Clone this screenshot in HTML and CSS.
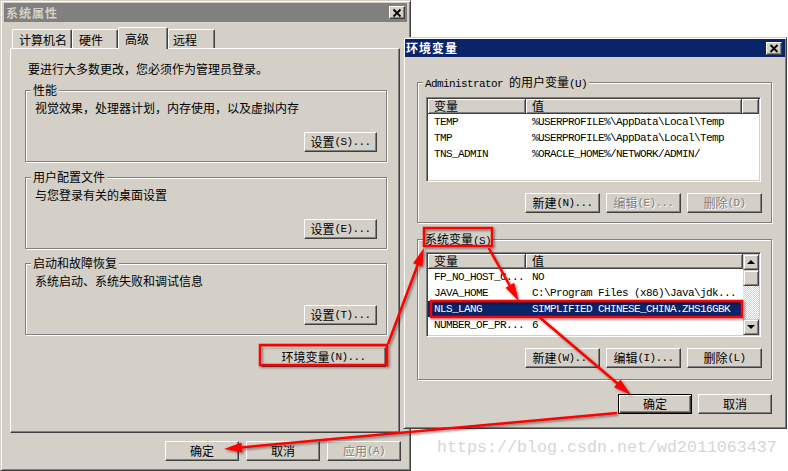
FILE: index.html
```html
<!DOCTYPE html>
<html lang="zh-CN">
<head>
<meta charset="utf-8">
<title>系统属性 - 环境变量</title>
<link rel="stylesheet" href="styles.css">
</head>
<body>
<div class="desk">
  <section class="win win-sys">
    <header class="title title-inactive">
      <span class="title-text">系统属性</span>
      <span class="close"><svg width="14" height="12" viewBox="0 0 14 12"><path d="M3.5 2.5 L10.5 9.5 M10.5 2.5 L3.5 9.5" stroke="#000" stroke-width="1.8" fill="none"/></svg></span>
    </header>
    <nav class="tabs">
      <span class="tab t1">计算机名</span>
      <span class="tab t2">硬件</span>
      <span class="tab t3 active">高级</span>
      <span class="tab t4">远程</span>
    </nav>
    <div class="panel">
      <p class="intro">要进行大多数更改，您必须作为管理员登录。</p>
      <div class="group g1">
        <span class="glabel">性能</span>
        <p class="gtext">视觉效果，处理器计划，内存使用，以及虚拟内存</p>
        <button class="btn btn-set">设置<span class="a">(S)...</span></button>
      </div>
      <div class="group g2">
        <span class="glabel">用户配置文件</span>
        <p class="gtext">与您登录有关的桌面设置</p>
        <button class="btn btn-set">设置<span class="a">(E)...</span></button>
      </div>
      <div class="group g3">
        <span class="glabel">启动和故障恢复</span>
        <p class="gtext">系统启动、系统失败和调试信息</p>
        <button class="btn btn-set">设置<span class="a">(T)...</span></button>
      </div>
      <button class="btn btn-env">环境变量<span class="a">(N)...</span></button>
    </div>
    <footer class="foot foot-sys">
      <button class="btn btn-foot">确定</button>
      <button class="btn btn-foot">取消</button>
      <button class="btn btn-foot disabled">应用<span class="a">(A)</span></button>
    </footer>
  </section>

  <section class="win win-env">
    <header class="title title-active">
      <span class="title-text">环境变量</span>
      <span class="close close-env"><svg width="14" height="11" viewBox="0 0 14 11"><path d="M3.5 2 L10.5 9 M10.5 2 L3.5 9" stroke="#000" stroke-width="1.8" fill="none"/></svg></span>
    </header>

    <div class="group egroup eg1">
      <span class="glabel"><span class="a">Administrator </span>的用户变量<span class="a">(U)</span></span>
      <div class="list list-user">
        <div class="lhead cols-user">
          <span class="hcell">变量</span>
          <span class="hcell">值</span>
          <span class="hcell"></span>
        </div>
        <div class="lrow cols-user"><span>TEMP</span><span>%USERPROFILE%\AppData\Local\Temp</span></div>
        <div class="lrow cols-user"><span>TMP</span><span>%USERPROFILE%\AppData\Local\Temp</span></div>
        <div class="lrow cols-user"><span>TNS_ADMIN</span><span>%ORACLE_HOME%/NETWORK/ADMIN/</span></div>
      </div>
      <div class="brow">
        <button class="btn btn-list">新建<span class="a">(N)...</span></button>
        <button class="btn btn-list disabled">编辑<span class="a">(E)...</span></button>
        <button class="btn btn-list disabled">删除<span class="a">(D)</span></button>
      </div>
    </div>

    <div class="group egroup eg2">
      <span class="glabel">系统变量<span class="a">(S)</span></span>
      <div class="list list-sys">
        <div class="lmain">
          <div class="lhead cols-sys">
            <span class="hcell">变量</span>
            <span class="hcell">值</span>
          </div>
          <div class="lrow cols-sys"><span>FP_NO_HOST_C...</span><span>NO</span></div>
          <div class="lrow cols-sys"><span>JAVA_HOME</span><span>C:\Program Files (x86)\Java\jdk...</span></div>
          <div class="lrow cols-sys sel"><span>NLS_LANG</span><span>SIMPLIFIED CHINESE_CHINA.ZHS16GBK</span></div>
          <div class="lrow cols-sys"><span>NUMBER_OF_PR...</span><span>6</span></div>
        </div>
        <div class="sbar">
          <span class="sbtn"><span class="tri-up"></span></span>
          <span class="sthumb"></span>
          <span class="strack"></span>
          <span class="sbtn"><span class="tri-down"></span></span>
        </div>
      </div>
      <div class="brow brow2">
        <button class="btn btn-list">新建<span class="a">(W)...</span></button>
        <button class="btn btn-list">编辑<span class="a">(I)...</span></button>
        <button class="btn btn-list">删除<span class="a">(L)</span></button>
      </div>
    </div>

    <footer class="foot foot-env">
      <button class="btn btn-foot default">确定</button>
      <button class="btn btn-foot">取消</button>
    </footer>
  </section>

  <div class="watermark">https://blog.csdn.net/wd2011063437</div>

  <svg class="marks" width="788" height="471" viewBox="0 0 788 471">
    <defs>
      <filter id="sh" x="-10%" y="-10%" width="130%" height="130%">
        <feDropShadow dx="1.5" dy="1.5" stdDeviation="1" flood-color="#000" flood-opacity="0.45"/>
      </filter>
    </defs>
    <g filter="url(#sh)">
      <g fill="none" stroke="#ff0000" stroke-width="2.5">
        <rect x="260" y="345" width="127" height="20"/>
        <rect x="424" y="228" width="68" height="18"/>
        <rect x="431" y="301" width="311" height="16"/>
        <line x1="388" y1="344" x2="418" y2="264"/>
        <line x1="488.7" y1="248" x2="510" y2="286"/>
        <line x1="538" y1="316" x2="617.5" y2="383.5"/>
        <line x1="617" y1="413" x2="241" y2="447.5"/>
      </g>
      <g fill="#ff0000">
        <polygon points="424,248 422.4,266.6 413,263.2"/>
        <polygon points="518.7,301 505.5,287.8 514.2,282.8"/>
        <polygon points="631,395 614,387.2 620.4,379.6"/>
        <polygon points="224,449 241.4,442.4 242.4,452.4"/>
      </g>
    </g>
  </svg>
</div>
</body>
</html>
```

FILE: styles.css
```css
* { box-sizing: border-box; }
html, body { margin: 0; padding: 0; }
body {
  background: #fff;
  font-family: "Noto Sans CJK SC", "Liberation Sans", sans-serif;
  font-size: 12px;
  color: #000;
}
.desk {
  position: relative;
  width: 788px;
  height: 471px;
  overflow: hidden;
}

/* windows */
.win {
  position: absolute;
  background: #d4d0c8;
  border: 1px solid;
  border-color: #d4d0c8 #404040 #404040 #d4d0c8;
  box-shadow: inset 1px 1px #fff, inset -1px -1px #808080;
  display: flex;
  flex-direction: column;
}
.win-sys { left: 0; top: 0; width: 411px; height: 471px; padding: 2px 3px; }
.win-env { left: 403px; top: 37px; width: 384px; height: 392px; padding: 1px; }

.title {
  display: flex;
  align-items: center;
  justify-content: space-between;
  flex: none;
}
.title-inactive { height: 19px; background: #808080; color: #d4d0c8; padding-left: 2px; }
.title-active { height: 18px; background: #0a246a; color: #fff; padding-left: 1px; }
.title-text { font-weight: bold; letter-spacing: 1px; line-height: 14px; }
.close {
  width: 16px;
  height: 13px;
  margin-right: 2px;
  background: #d4d0c8;
  border: 1px solid;
  border-color: #fff #404040 #404040 #fff;
  box-shadow: inset -1px -1px #808080;
  display: flex;
  align-items: center;
  justify-content: center;
}
.close-env { margin-right: 3px; }
.close svg { display: block; }

/* tabs */
.tabs {
  display: flex;
  align-items: flex-end;
  height: 21px;
  margin-top: 5px;
  padding-left: 8px;
  flex: none;
}
.tab {
  height: 19px;
  padding: 3px 0 0 6px;
  line-height: 14px;
  background: #d4d0c8;
  border-top: 1px solid #fff;
  border-left: 1px solid #fff;
  border-right: 1px solid #404040;
  box-shadow: inset -1px 0 #808080;
  border-radius: 2px 2px 0 0;
}
.t1 { width: 60px; }
.t2 { width: 46px; }
.t3 { width: 50px; }
.t4 { width: 47px; padding-left: 4px; }
.tab.active {
  height: 22px;
  margin-bottom: -1px;
  padding: 4px 0 0 6px;
  position: relative;
  z-index: 1;
}

/* panel */
.panel {
  width: 390px;
  height: 385px;
  margin-left: 6px;
  border: 1px solid;
  border-color: #fff #404040 #404040 #fff;
  box-shadow: inset -1px -1px #808080;
  padding: 13px 0 0 14px;
  display: flex;
  flex-direction: column;
  align-items: flex-start;
  flex: none;
}
.intro { margin: 0 0 0 3px; line-height: 14px; }

/* group boxes */
.group {
  position: relative;
  border: 1px solid #808080;
  box-shadow: inset 1px 1px #fff, 1px 1px #fff;
  display: flex;
  flex-direction: column;
}
.glabel {
  position: absolute;
  top: -8px;
  left: 5px;
  padding: 0 2px;
  background: #d4d0c8;
  line-height: 14px;
  white-space: nowrap;
}
.g1, .g2, .g3 {
  width: 362px;
  height: 72px;
  padding: 10px 9px 9px 9px;
}
.g1 { margin-top: 14px; }
.g2 { margin-top: 15px; }
.g3 { margin-top: 14px; }
.gtext { margin: 0; line-height: 14px; }

/* buttons */
.btn {
  appearance: none;
  font: inherit;
  margin: 0;
  padding: 0;
  height: 20px;
  background: #d4d0c8;
  color: #000;
  border: 1px solid;
  border-color: #fff #404040 #404040 #fff;
  box-shadow: inset -1px -1px #808080;
  display: flex;
  align-items: center;
  justify-content: center;
  line-height: 14px;
  white-space: nowrap;
  flex: none;
}
.btn-set { width: 73px; margin-top: auto; align-self: flex-end; }
.btn-env { width: 125px; margin-top: 12px; margin-right: 13px; align-self: flex-end; }
.btn-foot { width: 74px; }
.btn-list { width: 75px; }
.btn.disabled { color: #808080; text-shadow: 1px 1px #fff; }
.btn.default {
  border-color: #000;
  box-shadow: inset 1px 1px #fff, inset -1px -1px #404040, inset -2px -2px #808080;
}
.a {
  font-family: "Liberation Mono", "DejaVu Sans Mono", monospace;
  font-size: 11px;
  letter-spacing: -0.6px;
}

.foot { display: flex; justify-content: flex-end; flex: none; }
.foot-sys { margin-top: 8px; gap: 7px; padding-right: 6px; }
.foot-env { margin-top: 14px; gap: 6px; padding-right: 13px; }

/* env window groups */
.egroup { width: 355px; height: 141px; margin-left: 12px; padding-left: 8px; }
.eg1 { margin-top: 25px; padding-top: 14px; }
.eg2 { margin-top: 16px; padding-top: 12px; }
.brow {
  display: flex;
  justify-content: flex-end;
  gap: 6px;
  margin-top: 11px;
  padding-right: 9px;
}

/* list views */
.list {
  width: 335px;
  height: 85px;
  background: #fff;
  border: 1px solid;
  border-color: #808080 #fff #fff #808080;
  box-shadow: inset 1px 1px #404040, inset -1px -1px #d4d0c8;
  padding: 1px;
  flex: none;
}
.list-sys { display: flex; }
.lmain { flex: 1; min-width: 0; }
.cols-user { display: grid; grid-template-columns: 98px 216px 1fr; }
.cols-sys { display: grid; grid-template-columns: 98px 217px 1fr; }
.lhead { height: 15px; }
.hcell {
  background: #d4d0c8;
  border-right: 1px solid #404040;
  border-bottom: 1px solid #404040;
  box-shadow: inset 1px 1px #fff, inset -1px -1px #808080;
  padding-left: 6px;
  line-height: 14px;
}
.lrow {
  height: 16px;
  line-height: 16px;
  font-family: "Liberation Mono", "DejaVu Sans Mono", monospace;
  font-size: 11px;
  letter-spacing: -0.6px;
  white-space: nowrap;
}
.lhead + .lrow { margin-top: 0; }
.lrow span { padding-left: 6px; overflow: hidden; }
.lrow.sel { background: #0a246a; color: #fff; }

/* scrollbar */
.sbar { width: 16px; display: flex; flex-direction: column; }
.sbtn, .sthumb {
  height: 16px;
  background: #d4d0c8;
  border: 1px solid;
  border-color: #d4d0c8 #404040 #404040 #d4d0c8;
  box-shadow: inset 1px 1px #fff, inset -1px -1px #808080;
  display: flex;
  align-items: center;
  justify-content: center;
  flex: none;
}
.strack {
  flex: 1;
  background: repeating-conic-gradient(#fff 0 25%, #d4d0c8 0 50%) 0 0 / 2px 2px;
}
.tri-up {
  width: 0; height: 0;
  border-left: 4px solid transparent;
  border-right: 4px solid transparent;
  border-bottom: 4px solid #000;
}
.tri-down {
  width: 0; height: 0;
  border-left: 4px solid transparent;
  border-right: 4px solid transparent;
  border-top: 4px solid #000;
}

/* watermark & annotation overlay */
.watermark {
  position: absolute;
  left: 437px;
  top: 439px;
  font-family: "Liberation Mono", monospace;
  font-size: 16.67px;
  line-height: 18px;
  color: #d6d6d6;
  white-space: nowrap;
}
.marks {
  position: absolute;
  left: 0;
  top: 0;
  pointer-events: none;
}
```
